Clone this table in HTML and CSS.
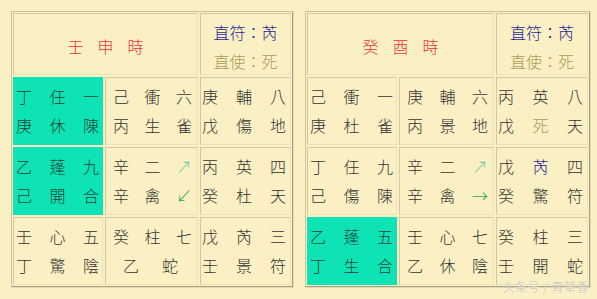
FILE: index.html
```html
<!DOCTYPE html>
<html lang="zh-Hant">
<head>
<meta charset="utf-8">
<link rel="stylesheet" href="styles.css">
</head>
<body>
<div class="page">
  <div class="pan pan-left">
    <div class="cell head-title"><span>壬</span><span>申</span><span>時</span></div>
    <div class="cell head-info"><div class="fu">直符：芮</div><div class="shi">直使：死</div></div>

    <div class="cell c1 teal"><div class="ln"><span>丁</span><span>任</span><span>一</span></div><div class="ln"><span>庚</span><span>休</span><span>陳</span></div></div>
    <div class="cell c2"><div class="ln"><span>己</span><span>衝</span><span>六</span></div><div class="ln"><span>丙</span><span>生</span><span>雀</span></div></div>
    <div class="cell c3"><div class="ln"><span>庚</span><span>輔</span><span>八</span></div><div class="ln"><span>戊</span><span>傷</span><span>地</span></div></div>

    <div class="cell c1 teal"><div class="ln"><span>乙</span><span>蓬</span><span>九</span></div><div class="ln"><span>己</span><span>開</span><span>合</span></div></div>
    <div class="cell c2"><div class="ln"><span>辛</span><span>二</span><span class="arr light">↗</span></div><div class="ln"><span>辛</span><span>禽</span><span class="arr">↙</span></div></div>
    <div class="cell c3"><div class="ln"><span>丙</span><span>英</span><span>四</span></div><div class="ln"><span>癸</span><span>杜</span><span>天</span></div></div>

    <div class="cell c1"><div class="ln"><span>壬</span><span>心</span><span>五</span></div><div class="ln"><span>丁</span><span>驚</span><span>陰</span></div></div>
    <div class="cell c2"><div class="ln"><span>癸</span><span>柱</span><span>七</span></div><div class="ln ln-center"><span>乙</span><span>蛇</span></div></div>
    <div class="cell c3"><div class="ln"><span>戊</span><span>芮</span><span>三</span></div><div class="ln"><span>壬</span><span>景</span><span>符</span></div></div>
  </div>

  <div class="pan pan-right">
    <div class="cell head-title"><span>癸</span><span>酉</span><span>時</span></div>
    <div class="cell head-info"><div class="fu">直符：芮</div><div class="shi">直使：死</div></div>

    <div class="cell c1"><div class="ln"><span>己</span><span>衝</span><span>一</span></div><div class="ln"><span>庚</span><span>杜</span><span>雀</span></div></div>
    <div class="cell c2"><div class="ln"><span>庚</span><span>輔</span><span>六</span></div><div class="ln"><span>丙</span><span>景</span><span>地</span></div></div>
    <div class="cell c3"><div class="ln"><span>丙</span><span>英</span><span>八</span></div><div class="ln"><span>戊</span><span class="olive">死</span><span>天</span></div></div>

    <div class="cell c1"><div class="ln"><span>丁</span><span>任</span><span>九</span></div><div class="ln"><span>己</span><span>傷</span><span>陳</span></div></div>
    <div class="cell c2"><div class="ln"><span>辛</span><span>二</span><span class="arr light">↗</span></div><div class="ln"><span>辛</span><span>禽</span><span class="arr">→</span></div></div>
    <div class="cell c3"><div class="ln"><span>戊</span><span class="blue">芮</span><span>四</span></div><div class="ln"><span>癸</span><span>驚</span><span>符</span></div></div>

    <div class="cell c1 teal"><div class="ln"><span>乙</span><span>蓬</span><span>五</span></div><div class="ln"><span>丁</span><span>生</span><span>合</span></div></div>
    <div class="cell c2"><div class="ln"><span>壬</span><span>心</span><span>七</span></div><div class="ln"><span>乙</span><span>休</span><span>陰</span></div></div>
    <div class="cell c3"><div class="ln"><span>癸</span><span>柱</span><span>三</span></div><div class="ln"><span>壬</span><span>開</span><span>蛇</span></div></div>
  </div>
</div>
<div class="watermark">头条号 / 青草香</div>
</body>
</html>
```
FILE: styles.css
```css
html, body {
  margin: 0;
  padding: 0;
  background: #faf0c4;
}
body {
  width: 597px;
  height: 299px;
  overflow: hidden;
  position: relative;
  font-family: "Noto Sans CJK TC", "Noto Sans CJK SC", sans-serif;
  font-size: 16px;
  font-weight: 300;
  color: #333333;
}
.page {
  display: flex;
  gap: 12px;
  padding: 11px 0 0 11px;
}
.pan {
  display: grid;
  grid-template-rows: 62px 68px 68px 68px;
  gap: 2px;
  padding: 1px;
  border: 1px solid #cfc59c;
  border-right-color: #a8a184;
  border-bottom-color: #a8a184;
  box-shadow: 1px 1px 0 #e2d9b0;
}
.pan-left {
  grid-template-columns: 90px 93px 91px;
}
.pan-right {
  grid-template-columns: 90px 95px 92px;
}
.cell {
  border: 1px solid #d3c9a0;
  border-right-color: #ebe2ba;
  border-bottom-color: #ebe2ba;
  background: #faf0c4;
  display: flex;
  flex-direction: column;
  justify-content: center;
}
.cell.teal {
  background: #0de3b4;
  border-color: #0de3b4;
  color: #1f4136;
}
.head-title {
  grid-column: span 2;
  flex-direction: row;
  align-items: center;
  justify-content: center;
  gap: 14px;
  color: #e8333a;
  padding-top: 3px;
}
.head-info {
  align-items: center;
  padding-top: 5px;
  line-height: 29px;
}
.fu {
  color: #1f1f96;
}
.shi {
  color: #a69c5a;
}
.ln {
  display: flex;
  justify-content: space-between;
  line-height: 29px;
}
.ln-center {
  justify-content: center;
  gap: 23px;
  padding-right: 4px;
}
.c1 {
  padding: 0 3px 0 2px;
}
.c2 {
  padding: 0 5px 0 7px;
}
.c3 {
  padding: 0 4px 0 1px;
}
.arr {
  color: #2fa35d;
  width: 16px;
  text-align: center;
}
.arr.light {
  color: #6cc79a;
}
.olive {
  color: #a69c5a;
}
.blue {
  color: #1f1f96;
}
.watermark {
  position: absolute;
  right: 8px;
  bottom: 4px;
  font-family: "Noto Sans CJK SC", sans-serif;
  font-size: 12px;
  color: #c4c0b4;
  text-shadow: 0 0 2px #ffffff;
  letter-spacing: 0.5px;
}
```
